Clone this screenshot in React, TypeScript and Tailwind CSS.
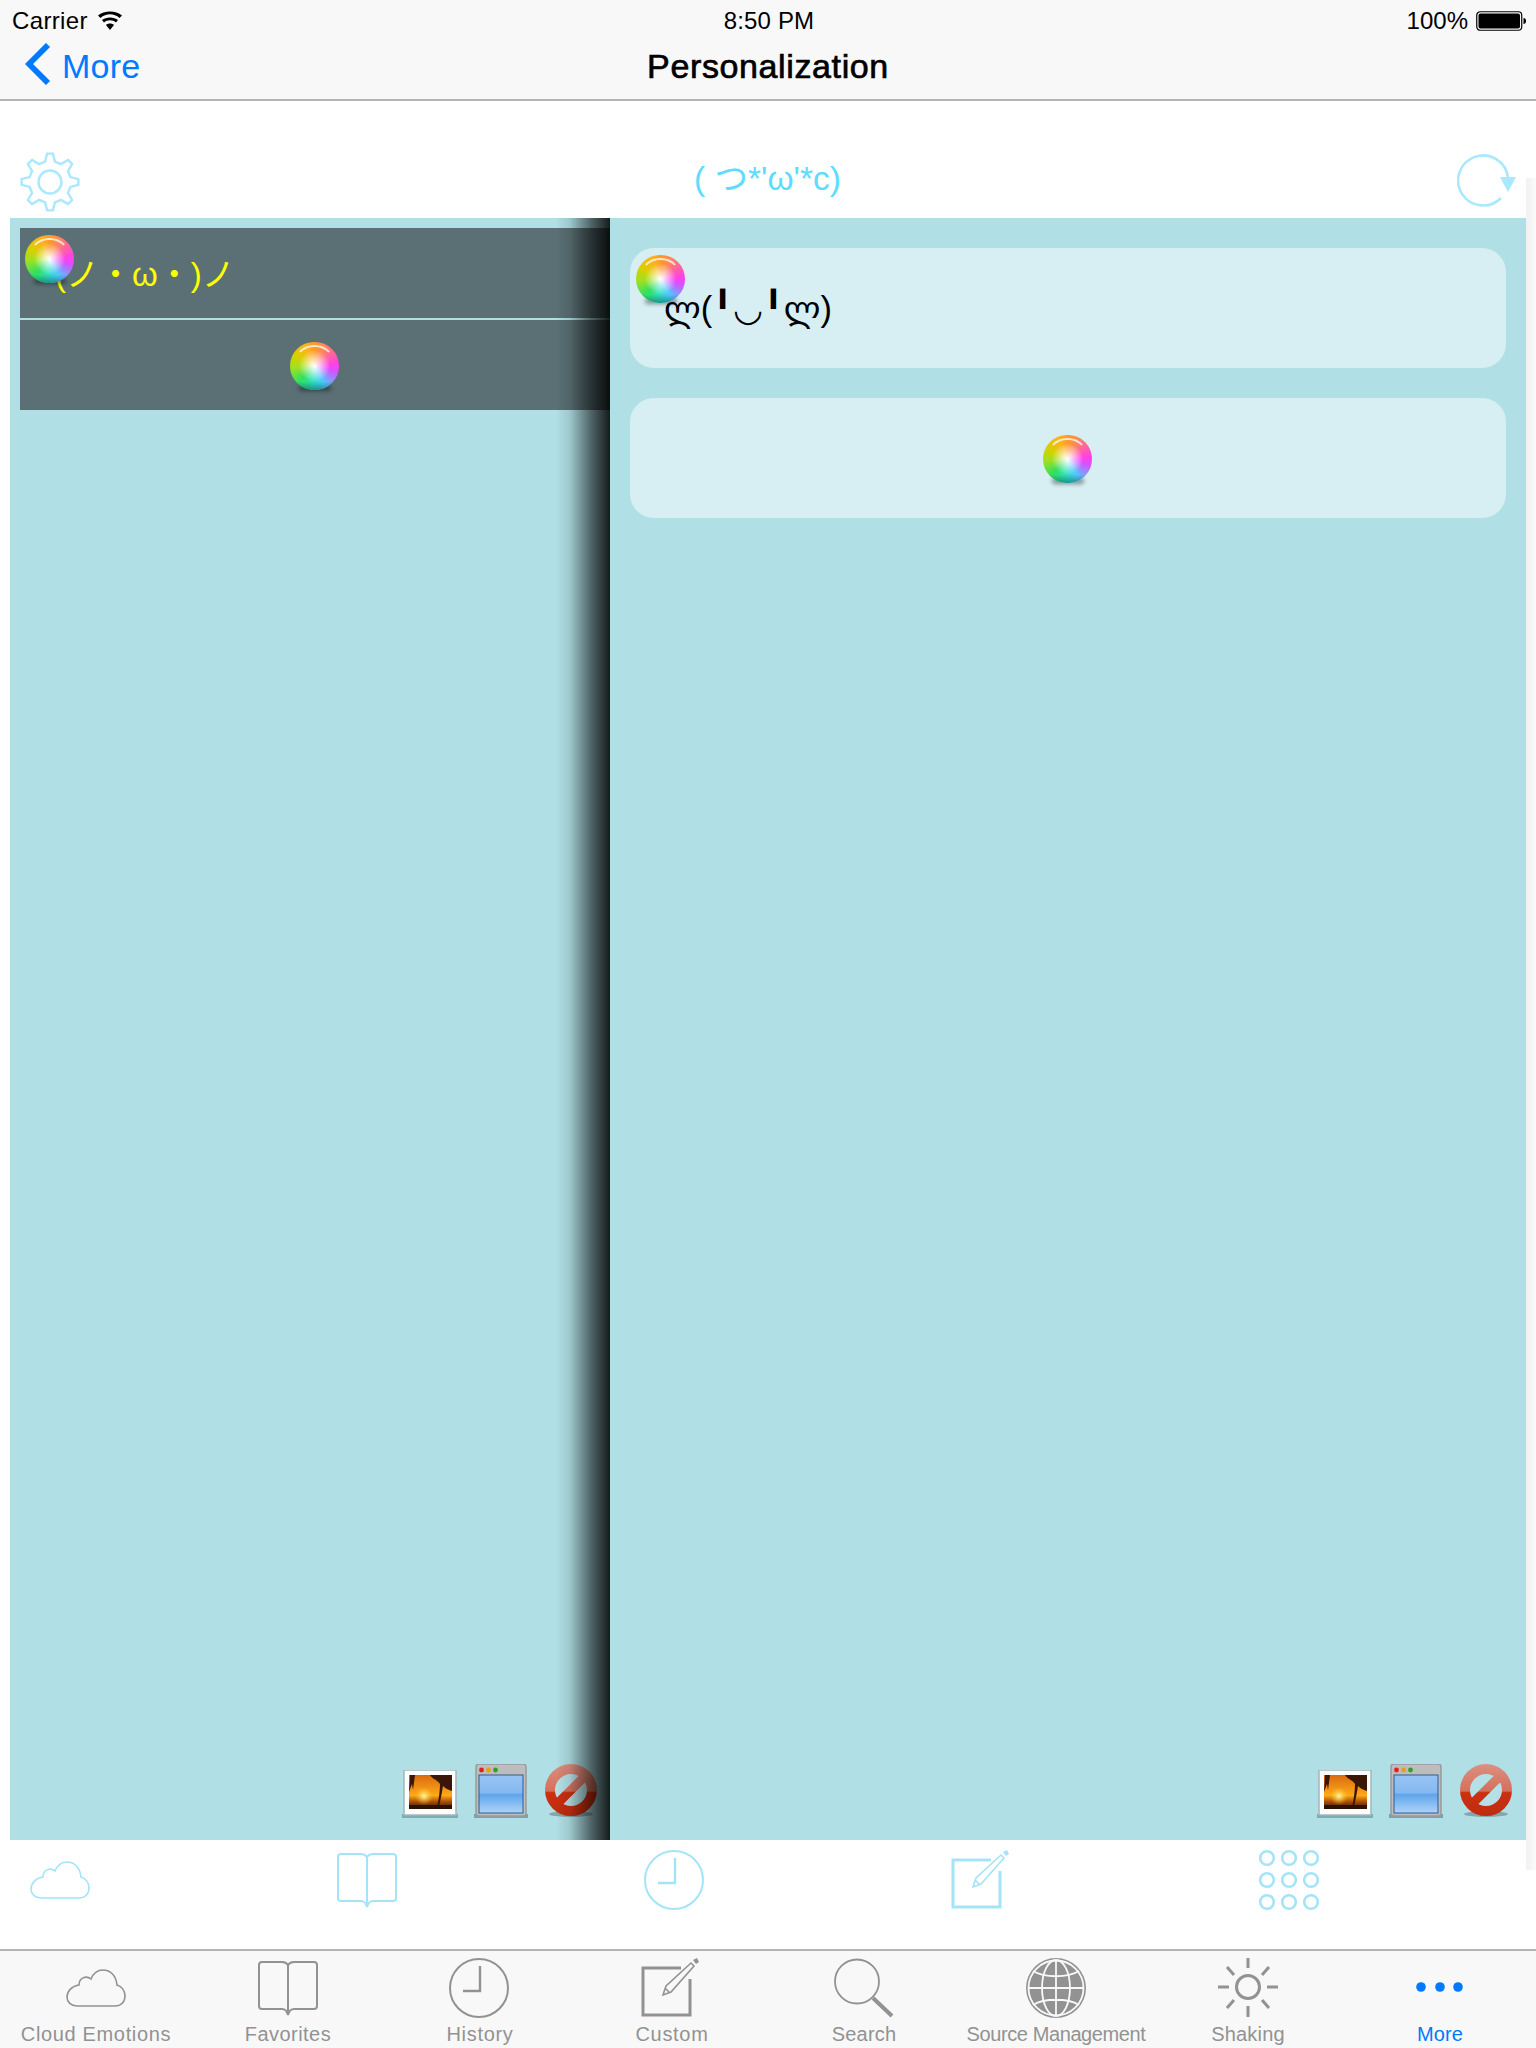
import React from "react";

const gearPath = () => {
  const teeth = 8;
  const pts: string[] = [];
  for (let i = 0; i < teeth; i++) {
    const a = (i / teeth) * Math.PI * 2 - Math.PI / 2;
    const step = (Math.PI * 2) / teeth;
    const p = (r: number, t: number) => `${(30 + r * Math.cos(t)).toFixed(2)} ${(30 + r * Math.sin(t)).toFixed(2)}`;
    pts.push(`${i === 0 ? "M" : "L"}${p(28.5, a - step * 0.13)}`);
    pts.push(`L${p(28.5, a + step * 0.13)}`);
    pts.push(`L${p(21, a + step * 0.3)}`);
    pts.push(`L${p(21, a + step * 0.7)}`);
  }
  return pts.join(" ") + "Z";
};

function Ball() {
  return (
    <div className="relative w-[50px] h-[50px] shrink-0">
      <div className="absolute left-[9px] right-[9px] bottom-[1px] h-[6px] rounded-full bg-black/40 blur-[2px]" />
      <div className="absolute left-0 top-0 w-[49px] h-[48px] rounded-full overflow-hidden bg-[conic-gradient(from_0deg,#ff9a2a,#ff8a50_25deg,#ff40e8_85deg,#d850ff_105deg,#50c8ff_150deg,#30e0c0_185deg,#30e060_225deg,#a0e020_265deg,#d8d000_300deg,#ffb020_340deg,#ff9a2a)]">
        <div className="absolute inset-0 rounded-full bg-[radial-gradient(circle_at_50%_50%,rgba(255,255,255,1)_0%,rgba(255,255,255,0.7)_14%,rgba(255,255,255,0)_46%)]" />
        <div className="absolute inset-0 rounded-full bg-[linear-gradient(to_bottom,rgba(0,0,0,0)_82%,rgba(0,70,80,0.5)_100%)]" />
        <div className="absolute inset-[3px] rounded-full border-[2px] border-transparent border-t-white/75" />
      </div>
    </div>
  );
}

const PictureIcon = () => (
  <svg width="56" height="48" viewBox="0 0 56 48">
    <defs>
      <linearGradient id="sunset" x1="0" y1="0" x2="0" y2="1">
        <stop offset="0" stopColor="#d96a10" />
        <stop offset="0.6" stopColor="#ffa818" />
        <stop offset="0.8" stopColor="#a04808" />
        <stop offset="1" stopColor="#301808" />
      </linearGradient>
      <radialGradient id="sun" cx="0.5" cy="0.5" r="0.5">
        <stop offset="0" stopColor="#fff8a0" />
        <stop offset="1" stopColor="#ffc020" stopOpacity="0" />
      </radialGradient>
    </defs>
    <rect x="0" y="44" width="56" height="4" fill="#5f8c94" opacity="0.6" />
    <rect x="2" y="0" width="52" height="45" fill="#fdfdfd" stroke="#a8b4b8" strokeWidth="1.5" />
    <rect x="7" y="5" width="43" height="34" fill="url(#sunset)" />
    <circle cx="22" cy="26" r="9" fill="url(#sun)" />
    <path d="M28 5 C30 9 36 10 38 14 C38 20 37 28 35 37 L37 37 C39 28 40 22 41 16 C44 19 47 20 50 21 V5Z" fill="#3a1606" />
    <path d="M8 5 L7 22 L10 14 L11 20 L13 5Z" fill="#3a1606" />
    <rect x="7" y="35" width="43" height="4" fill="#2a1206" />
  </svg>
);

const WindowIcon = () => (
  <svg width="54" height="54" viewBox="0 0 54 54">
    <defs>
      <linearGradient id="winBlue" x1="0" y1="0" x2="0" y2="1">
        <stop offset="0" stopColor="#98c4f4" />
        <stop offset="0.48" stopColor="#84b8f0" />
        <stop offset="0.5" stopColor="#5ca4ec" />
        <stop offset="1" stopColor="#b0d4f8" />
      </linearGradient>
    </defs>
    <rect x="0" y="50" width="54" height="4" fill="#5f8c94" opacity="0.7" />
    <rect x="2" y="0" width="50" height="52" rx="3" fill="#bdbdbd" stroke="#9a9a9a" strokeWidth="1.5" />
    <rect x="5" y="11" width="44" height="38" fill="url(#winBlue)" stroke="#2a5c94" strokeWidth="1" />
    <circle cx="7.5" cy="6" r="2.4" fill="#e02020" />
    <circle cx="14.5" cy="6" r="2.4" fill="#e8a010" />
    <circle cx="21.5" cy="6" r="2.4" fill="#30a020" />
  </svg>
);

const NoIcon = () => (
  <svg width="52" height="54" viewBox="0 0 52 54">
    <defs>
      <linearGradient id="redRing" gradientUnits="userSpaceOnUse" x1="0" y1="0" x2="0" y2="52">
        <stop offset="0" stopColor="#dc9080" />
        <stop offset="0.52" stopColor="#d4705c" />
        <stop offset="0.55" stopColor="#cc3010" />
        <stop offset="1" stopColor="#c02c10" />
      </linearGradient>
    </defs>
    <ellipse cx="26" cy="50" rx="22" ry="3" fill="#000" opacity="0.25" />
    <circle cx="26" cy="26" r="21" fill="#fff" fillOpacity="0.05" stroke="url(#redRing)" strokeWidth="10" />
    <path d="M11 41 L41 11" stroke="url(#redRing)" strokeWidth="9" />
  </svg>
);

const I = {
  cloud: (
    <path d="M11 48 H49 C55 48 59 44 59 38 C59 32 55 28 51 27 C50 17 44 12 37 12 C31 12 27 16 25 21 C20 17 13 20 13 27 C6 28 1 33 1 39 C1 44 5 48 11 48Z" fill="none" stroke="currentColor" strokeWidth="1.6" />
  ),
  book: (
    <path d="M30 7 C28 4 26 4 24 4 H4 C2 4 1 5 1 7 V48 C1 50 2 51 4 51 H24 C27 51 29 53 30 57 C31 53 33 51 36 51 H56 C58 51 59 50 59 48 V7 C59 5 58 4 56 4 H36 C34 4 32 4 30 7 Z M30 7 V57" fill="none" stroke="currentColor" strokeWidth="2" />
  ),
  clock: (
    <g fill="none" stroke="currentColor">
      <circle cx="29" cy="30" r="29" strokeWidth="2" />
      <path d="M30 8 V33 H13" strokeWidth="2.4" />
    </g>
  ),
  edit: (
    <g fill="none" stroke="currentColor" transform="translate(-2 -1)">
      <path d="M41 11 H3 V58 H50 V22" strokeWidth="3" />
      <path d="M23 38 L26 29 L51 6 L54 9 L31 35 Z M25 31 L29 35" strokeWidth="1.6" />
      <path d="M53 3 L57 1 L59 5 L56 7Z" fill="currentColor" stroke="none" />
    </g>
  ),
  grid: (
    <g fill="none" stroke="currentColor" strokeWidth="2.6">
      {[8, 30, 52].map((y) => [8, 30, 52].map((x) => <circle key={`${x}-${y}`} cx={x} cy={y} r="6.8" />))}
    </g>
  ),
  search: (
    <g fill="none" stroke="currentColor">
      <circle cx="23" cy="23.5" r="22" strokeWidth="1.8" />
      <path d="M39 40 L58 58" strokeWidth="4" />
    </g>
  ),
  globe: (
    <g>
      <circle cx="30" cy="30" r="30" fill="currentColor" />
      <g fill="none" stroke="#f8f8f8" strokeWidth="1.8">
        <circle cx="30" cy="30" r="27.5" />
        <ellipse cx="30" cy="30" rx="14" ry="28" />
        <path d="M30 2 V58 M2 30 H58 M7 13 C18 20 42 20 53 13 M7 47 C18 40 42 40 53 47" />
      </g>
    </g>
  ),
  sun: (
    <g fill="none" stroke="currentColor">
      <circle cx="30" cy="29" r="11.5" strokeWidth="3" />
      <path d="M30 0 V10 M30 48 V59 M0 29 H11 M49 29 H60 M9 9 L16 17 M51 9 L44 17 M9 50 L16 42 M51 50 L44 42" strokeWidth="3" />
    </g>
  ),
  dots: (
    <g fill="currentColor">
      <circle cx="11" cy="29" r="4.8" />
      <circle cx="30" cy="29" r="4.8" />
      <circle cx="48" cy="29" r="4.8" />
    </g>
  ),
};

const Icon = ({ children }: { children: React.ReactNode }) => (
  <svg width="60" height="60" viewBox="0 0 60 60" className="block shrink-0 overflow-visible">
    {children}
  </svg>
);

const tabs = [
  ["Cloud Emotions", I.cloud, "tracking-[0.65px]"],
  ["Favorites", I.book, "tracking-[0.45px]"],
  ["History", I.clock, "tracking-[0.7px]"],
  ["Custom", I.edit, "tracking-[0.7px]"],
  ["Search", I.search, "tracking-[0.2px]"],
  ["Source Management", I.globe, "tracking-[-0.4px]"],
  ["Shaking", I.sun, "tracking-[0.2px]"],
  ["More", I.dots, "tracking-[0.1px]"],
] as const;

const Tools = () => (
  <div className="flex items-end">
    <PictureIcon />
    <div className="ml-[16px]">
      <WindowIcon />
    </div>
    <div className="ml-[17px]">
      <NoIcon />
    </div>
  </div>
);

const sans = "font-['Liberation_Sans','Noto_Sans_CJK_JP','DejaVu_Sans',sans-serif]";

export default function App() {
  return (
    <div className={`w-[1536px] h-[2048px] flex flex-col bg-white overflow-hidden ${sans}`}>
      <header className="h-[101px] shrink-0 bg-[#f8f8f8] border-b-[2px] border-[#b4b4b4] flex flex-col text-black">
        <div className="h-[40px] grid grid-cols-3 items-center pl-[12px] pr-[10px] pt-[1px] text-[24px] leading-none">
          <div className="flex items-center gap-[10px]">
            <span className="tracking-[0.35px]">Carrier</span>
            <svg width="26" height="20" viewBox="0 0 26 20" className="-ml-[1px]">
              <path d="M13 19 L9 14 C11 12 15 12 17 14Z M7 11.5 L5 9 C9 5.5 17 5.5 21 9 L19 11.5 C16 8.5 10 8.5 7 11.5Z M3.5 7 L1 4.5 C7 -1 19 -1 25 4.5 L22.5 7 C17 2 9 2 3.5 7Z" fill="#000" />
            </svg>
          </div>
          <div className="text-center tracking-[0.15px]">8:50 PM</div>
          <div className="flex items-center justify-end gap-[8px]">
            <span>100%</span>
            <svg width="50" height="20" viewBox="0 0 50 20">
              <rect x="0.75" y="0.75" width="45" height="18.5" rx="3.5" fill="none" stroke="#000" strokeWidth="1.2" />
              <rect x="2.5" y="2.5" width="41.5" height="15" rx="2" fill="#000" />
              <path d="M47.5 7 C49 7 50 8 50 10 C50 12 49 13 47.5 13Z" fill="#000" />
            </svg>
          </div>
        </div>
        <div className="h-[59px] relative flex items-center justify-center">
          <div className="absolute left-[25px] top-[3px] flex items-start text-[#007aff] text-[34px] leading-[46px]">
            <svg width="26" height="42" viewBox="0 0 26 42" className="mr-[12px]">
              <path d="M23 2 L4 21 L23 40" fill="none" stroke="#007aff" strokeWidth="5.8" />
            </svg>
            <span className="-ml-px tracking-[0.25px]">More</span>
          </div>
          <span className="text-[34px] tracking-[0.62px] [-webkit-text-stroke:0.7px_black] leading-none mt-[-7px]">Personalization</span>
        </div>
      </header>

      <div className="h-[117px] shrink-0 flex items-end justify-between pl-[20px] pr-[20px] pb-[6px]">
        <svg width="60" height="60" viewBox="0 0 60 60" className="text-[#a9e8ff]">
          <path d={gearPath()} fill="none" stroke="currentColor" strokeWidth="2.4" />
          <circle cx="30" cy="30" r="11.5" fill="none" stroke="currentColor" strokeWidth="2.4" />
        </svg>
        <span className="text-[#5ddcff] text-[33.5px] leading-none mb-[17px] mr-[2px]">( つ*'ω'*c)</span>
        <svg width="60" height="60" viewBox="0 0 60 60" className="text-[#a9e8ff] mb-[1px] mr-[-1px]">
          <path d="M44 47 A25 25 0 1 1 51 27" fill="none" stroke="currentColor" strokeWidth="2.6" />
          <path d="M43 26 H59 L51 41Z" fill="currentColor" />
        </svg>
      </div>

      <main className="relative h-[1622px] shrink-0 mx-[10px] flex bg-[#b0dfe5]">
        <section className="relative w-[600px] shrink-0 flex flex-col justify-between pl-[10px] pt-[10px] pb-[22px]">
          <div className="flex flex-col text-[#ffff00]">
            <div className="relative h-[90px] bg-[#5a7074] flex items-center pl-[35px] pt-[2px] text-[33px] leading-none">
              <span>(ノ・ω・)ノ</span>
              <div className="absolute left-[5px] top-[7px]">
                <Ball />
              </div>
            </div>
            <div className="h-[2px] bg-[#b0dfe5]" />
            <div className="h-[90px] bg-[#5a7074] flex items-center justify-center pt-[4px]">
              <Ball />
            </div>
          </div>
          <div className="flex justify-end pr-[13px]">
            <Tools />
          </div>
          <div className="absolute right-0 top-0 bottom-0 w-[54px] bg-[linear-gradient(to_right,rgba(0,0,0,0),rgba(0,0,0,0.1)_25%,rgba(0,0,0,0.55)_65%,rgba(0,0,0,0.88)_100%)]" />
        </section>
        <section className="flex-1 flex flex-col justify-between pt-[30px] pb-[22px] px-[20px]">
          <div className="flex flex-col gap-[30px]">
            <div className="relative h-[120px] rounded-[24px] bg-[#d7eff3] flex items-center pl-[34px] pt-[2px] text-black text-[34.5px] leading-none font-['Liberation_Sans','DejaVu_Sans','Noto_Sans_CJK_JP',sans-serif]">
              <span>ლ(╹◡╹ლ)</span>
              <div className="absolute left-[6px] top-[7px]">
                <Ball />
              </div>
            </div>
            <div className="h-[120px] rounded-[24px] bg-[#d7eff3] flex items-center justify-center pt-[4px]">
              <Ball />
            </div>
          </div>
          <div className="flex justify-end mr-[-6px]">
            <Tools />
          </div>
        </section>
        <div className="absolute left-full top-[-40px] bottom-[-30px] w-[10px] bg-[linear-gradient(to_right,#f0f0f0,#fbfbfb)]" />
      </main>

      <div className="h-[109px] shrink-0 flex justify-between items-start pl-[30px] pr-[217px] pt-[10px] text-[#a4e4f8]">
        <Icon>{I.cloud}</Icon>
        <Icon>{I.book}</Icon>
        <Icon>{I.clock}</Icon>
        <Icon>{I.edit}</Icon>
        <Icon>{I.grid}</Icon>
      </div>

      <nav className="flex-1 bg-[#f8f8f8] border-t-[2px] border-[#b4b4b4] grid grid-cols-8">
        {tabs.map(([label, icon, track], i) => (
          <div key={label} className={`flex flex-col items-center pt-[7px] ${i === 7 ? "text-[#007aff]" : "text-[#929292]"}`}>
            <Icon>{icon}</Icon>
            <span className={`text-[20px] leading-none mt-[6px] whitespace-nowrap ${track}`}>{label}</span>
          </div>
        ))}
      </nav>
    </div>
  );
}
